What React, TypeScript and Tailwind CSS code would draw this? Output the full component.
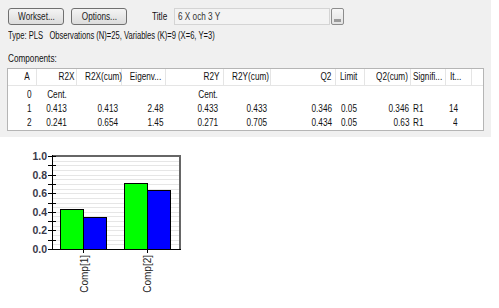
import React from "react";

const font = "font-['Liberation_Sans',Arial,sans-serif]";

function N({ children, o = "origin-left" }: { children: React.ReactNode; o?: string }) {
  return <span className={`inline-block whitespace-pre scale-x-[0.82] ${o}`}>{children}</span>;
}

type Col = { w: number; h: string; hc: string; ho: string; d: string; dor: string };
const cols: Col[] = [
  { w: 29, h: "A", hc: "text-right pr-[6px]", ho: "origin-right", d: "text-right pr-[5px]", dor: "origin-right" },
  { w: 40, h: "R2X", hc: "text-right pr-[2px]", ho: "origin-right", d: "text-center", dor: "origin-center" },
  { w: 45, h: "R2X(cum)", hc: "text-right pr-[3px]", ho: "origin-right", d: "text-right pr-[4px]", dor: "origin-right" },
  { w: 44, h: "Eigenv...", hc: "text-right pr-[4px]", ho: "origin-right", d: "text-right pr-[3px]", dor: "origin-right" },
  { w: 58, h: "R2Y", hc: "text-right pr-[4px]", ho: "origin-right", d: "text-right pr-[6px]", dor: "origin-right" },
  { w: 47, h: "R2Y(cum)", hc: "text-right pr-[2px]", ho: "origin-right", d: "text-right pr-[4px]", dor: "origin-right" },
  { w: 65, h: "Q2", hc: "text-right pr-[4px]", ho: "origin-right", d: "text-right pr-[4px]", dor: "origin-right" },
  { w: 29, h: "Limit", hc: "text-left pl-[4px]", ho: "origin-left", d: "text-left pl-[5px]", dor: "origin-left" },
  { w: 46, h: "Q2(cum)", hc: "text-right pr-[2px]", ho: "origin-right", d: "text-right pr-[2px]", dor: "origin-right" },
  { w: 35, h: "Signifi...", hc: "text-left pl-[2px]", ho: "origin-left", d: "text-left pl-[2px]", dor: "origin-left" },
  { w: 26, h: "It...", hc: "text-left pl-[4px]", ho: "origin-left", d: "text-right pr-[14px]", dor: "origin-right" },
];

const rows: string[][] = [
  ["0", "Cent.", "", "", "Cent.", "", "", "", "", "", ""],
  ["1", "0.413", "0.413", "2.48", "0.433", "0.433", "0.346", "0.05", "0.346", "R1", "14"],
  ["2", "0.241", "0.654", "1.45", "0.271", "0.705", "0.434", "0.05", "0.63", "R1", "4"],
];

function Chart() {
  const y = (v: number) => 249 - v * 93;
  const grid: number[] = [];
  for (let i = 1; i < 20; i++) grid.push(i * 0.05);
  const ticks: number[] = [];
  for (let i = 0; i <= 10; i++) ticks.push(i * 0.1);
  const bars = [
    { x: 60, v: 0.433, c: "#00ff00" },
    { x: 83, v: 0.346, c: "#0000ff" },
    { x: 124, v: 0.705, c: "#00ff00" },
    { x: 147, v: 0.63, c: "#0000ff" },
  ];
  return (
    <svg width="200" height="171" viewBox="0 137 200 171" className="block">
      <rect x="52" y="156" width="128" height="93" fill="#ffffff" />
      {grid.map((g) => (
        <line key={g} x1="53" x2="179" y1={Math.round(y(g)) + 0.5} y2={Math.round(y(g)) + 0.5} stroke="#e6e6e6" strokeWidth="1" />
      ))}
      {bars.map((b) => (
        <rect key={b.x} x={b.x + 0.5} y={Math.round(y(b.v)) + 0.5} width="23" height={249 - Math.round(y(b.v))} fill={b.c} stroke="#000" strokeWidth="1" />
      ))}
      <line x1="52" x2="181" y1="156" y2="156" stroke="#666" strokeWidth="2" />
      <line x1="180" x2="180" y1="155" y2="250" stroke="#666" strokeWidth="2" />
      <line x1="52.5" x2="52.5" y1="155" y2="250" stroke="#000" strokeWidth="1" />
      <line x1="52" x2="181" y1="249.5" y2="249.5" stroke="#000" strokeWidth="1" />
      {ticks.map((t) => (
        <line key={t} x1="48" x2="56" y1={Math.round(y(t)) + 0.5} y2={Math.round(y(t)) + 0.5} stroke="#000" strokeWidth="1" />
      ))}
      {[0, 0.2, 0.4, 0.6, 0.8, 1.0].map((t) => (
        <text key={t} x="47" y={y(t) + 4} textAnchor="end" fontFamily="Liberation Sans, Arial, sans-serif" fontSize="10.5" fontWeight="bold" fill="#3a3a4a">
          {t.toFixed(1)}
        </text>
      ))}
      <line x1="83.5" x2="83.5" y1="249" y2="253" stroke="#000" />
      <line x1="147.5" x2="147.5" y1="249" y2="253" stroke="#000" />
      <text transform="translate(88,255) rotate(-90)" textAnchor="end" fontFamily="Liberation Sans, Arial, sans-serif" fontSize="10" fill="#222">
        Comp[1]
      </text>
      <text transform="translate(151,255) rotate(-90)" textAnchor="end" fontFamily="Liberation Sans, Arial, sans-serif" fontSize="10" fill="#222">
        Comp[2]
      </text>
    </svg>
  );
}

export default function App() {
  return (
    <div className={`w-[499px] h-[308px] bg-white overflow-hidden ${font} text-[10px] text-[#111]`}>
      <div className="w-[491px] h-[137px] bg-[#f0f0f0] pt-[8px] flex flex-col">
        <div className="flex items-center h-[17px] pl-[8px]">
          <button className="w-[56px] h-[17px] border border-[#707070] rounded-[3px] bg-linear-to-b from-[#f4f4f4] to-[#dcdcdc] text-[10px] leading-none text-[#222]">
            <N o="origin-center">Workset...</N>
          </button>
          <button className="ml-[7px] w-[56px] h-[17px] border border-[#707070] rounded-[3px] bg-linear-to-b from-[#f4f4f4] to-[#dcdcdc] text-[10px] leading-none text-[#222]">
            <N o="origin-center">Options...</N>
          </button>
          <span className="ml-[25px] w-[22px] leading-none">
            <N>Title</N>
          </span>
          <div className="w-[156px] h-[17px] border border-[#d4d4d4] bg-[#f3f3f3] flex items-center pl-[3px] leading-none text-[#333]">
            <N>6 X och 3 Y</N>
          </div>
          <div className="ml-[1px] w-[13px] h-[17px] border border-[#8c8c8c] rounded-[2px] bg-linear-to-b from-[#f6f6f6] to-[#e2e2e2] flex items-end justify-center pb-[2px]">
            <div className="w-[7px] h-[3px] bg-[#9a9a9a]" />
          </div>
        </div>
        <div className="pl-[8px] mt-[5px] h-[12px] leading-[12px]">
          <span className="inline-block whitespace-pre scale-x-[0.76] origin-left">
            {"Type: PLS   Observations (N)=25, Variables (K)=9 (X=6, Y=3)"}
          </span>
        </div>
        <div className="pl-[8px] mt-[11px] h-[12px] leading-[12px]">
          <N>Components:</N>
        </div>
        <div className="ml-[7px] mt-[3px] w-[477px] h-[63px] border border-[#b5b5b5] bg-white flex flex-col">
          <div className="flex h-[17px] border-b border-[#e5e5e5]">
            {cols.map((c, i) => (
              <div
                key={i}
                style={{ width: c.w }}
                className={`h-full border-r border-[#e5e5e5] leading-[16px] whitespace-nowrap ${c.hc}`}
              >
                <N o={c.ho}>{c.h}</N>
              </div>
            ))}
            <div className="flex-1" />
          </div>
          <div className="mt-[2px] flex flex-col">
            {rows.map((r, ri) => (
              <div key={ri} className="flex h-[14px]">
                {cols.map((c, i) => (
                  <div key={i} style={{ width: c.w }} className={`leading-[14px] whitespace-nowrap ${c.d}`}>
                    <N o={c.dor}>{r[i]}</N>
                  </div>
                ))}
              </div>
            ))}
          </div>
        </div>
      </div>
      <Chart />
    </div>
  );
}
